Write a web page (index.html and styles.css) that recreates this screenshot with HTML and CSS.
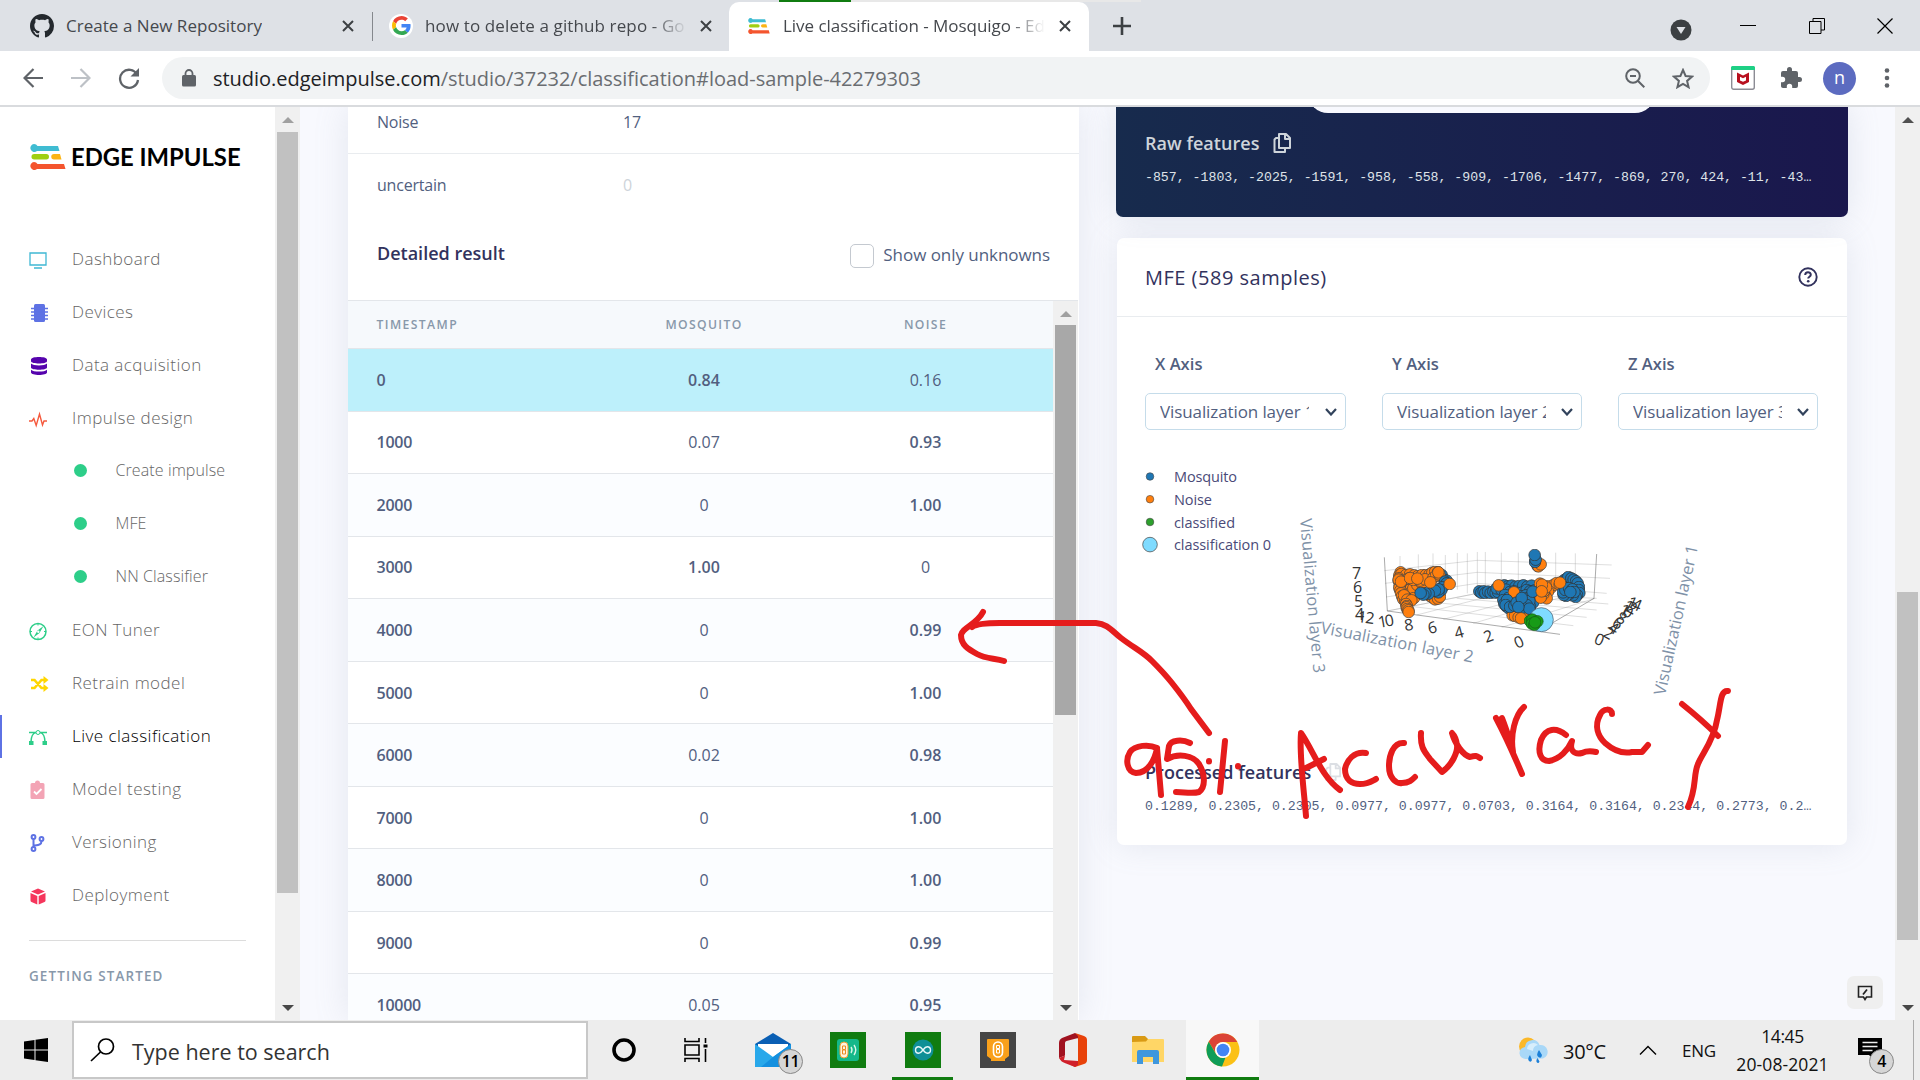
FILE: index.html
```html
<!DOCTYPE html>
<html lang="en">
<head>
<meta charset="utf-8">
<title>Live classification - Mosquigo - Edge Impulse</title>
<link rel="stylesheet" href="styles.css">
</head>
<body>
<svg class="defs" width="0" height="0">
  <defs>
    <symbol id="ei" viewBox="0 0 36 26">
      <path fill="#3fbcd2" d="M4 0a4 4 0 0 1 3.500 2H28l1.500 5H7a4 4 0 1 1-3-7z"/>
      <rect x="1.500" y="10" width="17.500" height="5.500" rx="2.700" fill="#9fcf12"/>
      <path fill="#fcb414" d="M24 10h6l1.500 5.500H24a2.700 2.700 0 0 1 0-5.500z"/>
      <path fill="#f4552e" d="M4 18a4 4 0 0 1 3.500 2H34l1.500 5H7a4 4 0 1 1-3-7z"/>
    </symbol>
    <symbol id="x" viewBox="0 0 12 12"><path d="M1 1l10 10M11 1L1 11" stroke="#3c4043" stroke-width="2" fill="none"/></symbol>
    <symbol id="copy" viewBox="0 0 18 20"><path d="M6 1h7l4 4v10H6zM12 1v5h5M6 5H3L1.500 6.500V19H12v-4" fill="none" stroke="currentColor" stroke-width="2" stroke-linejoin="round"/></symbol>
    <symbol id="chev" viewBox="0 0 12 8"><path d="M1 1l5 5.500L11 1" fill="none" stroke="#32435c" stroke-width="2.200"/></symbol>
    <marker id="mb" viewBox="-19 -19 38 38" markerWidth="38" markerHeight="38" markerUnits="userSpaceOnUse"><circle r="17.500" fill="#1f77b4" stroke="#333" stroke-width="2.200"/></marker>
    <marker id="mo" viewBox="-19 -19 38 38" markerWidth="38" markerHeight="38" markerUnits="userSpaceOnUse"><circle r="17.500" fill="#ff7f0e" stroke="#444" stroke-width="2.200"/></marker>
    <marker id="mg" viewBox="-19 -19 38 38" markerWidth="38" markerHeight="38" markerUnits="userSpaceOnUse"><circle r="17.500" fill="#179b17" stroke="#175f17" stroke-width="2.200"/></marker>
  </defs>
</svg>

<header class="tabs">
  <div class="tab t1">
    <svg width="24" height="24" viewBox="0 0 16 16"><path fill="#24292e" d="M8 0C3.580 0 0 3.580 0 8c0 3.540 2.290 6.530 5.470 7.590.4.070.55-.17.55-.38 0-.19-.01-.82-.01-1.490-2.010.37-2.530-.49-2.690-.94-.09-.23-.48-.94-.82-1.130-.28-.15-.68-.52-.01-.53.63-.01 1.080.58 1.230.82.72 1.210 1.870.87 2.330.66.070-.52.28-.87.51-1.070-1.780-.2-3.640-.89-3.640-3.950 0-.87.31-1.590.82-2.150-.08-.2-.36-1.020.08-2.120 0 0 .67-.21 2.200.82.64-.18 1.320-.27 2-.27s1.360.09 2 .27c1.530-1.040 2.200-.82 2.200-.82.44 1.100.16 1.920.08 2.120.51.56.82 1.270.82 2.150 0 3.070-1.870 3.750-3.650 3.950.29.25.54.73.54 1.480 0 1.070-.01 1.930-.01 2.200 0 .21.15.46.55.38A8.010 8.010 0 0 0 16 8c0-4.420-3.580-8-8-8z"/></svg>
    <span class="tt">Create a New Repository</span>
    <svg class="cl" width="12" height="12"><use href="#x"/></svg>
  </div>
  <div class="tab t2">
    <span class="gicon"><svg width="19" height="19" viewBox="0 0 48 48"><path fill="#EA4335" d="M24 9.500c3.540 0 6.710 1.220 9.210 3.600l6.850-6.850C35.900 2.380 30.470 0 24 0 14.620 0 6.510 5.380 2.560 13.220l7.980 6.190C12.430 13.720 17.740 9.500 24 9.500z"/><path fill="#4285F4" d="M46.980 24.550c0-1.570-.15-3.090-.38-4.550H24v9.020h12.940c-.58 2.960-2.260 5.480-4.780 7.180l7.730 6c4.510-4.180 7.090-10.360 7.090-17.650z"/><path fill="#FBBC05" d="M10.530 28.590c-.48-1.450-.76-2.990-.76-4.590s.27-3.140.76-4.590l-7.980-6.190C.92 16.460 0 20.120 0 24c0 3.880.92 7.540 2.560 10.780l7.970-6.190z"/><path fill="#34A853" d="M24 48c6.480 0 11.930-2.130 15.890-5.810l-7.730-6c-2.150 1.450-4.920 2.300-8.160 2.300-6.260 0-11.570-4.220-13.470-9.910l-7.980 6.190C6.510 42.620 14.620 48 24 48z"/></svg></span>
    <span class="tt fade">how to delete a github repo - Go</span>
    <svg class="cl" width="12" height="12"><use href="#x"/></svg>
  </div>
  <div class="tab t3">
    <svg width="22" height="16" viewBox="0 0 36 26" preserveAspectRatio="none"><use href="#ei" width="36" height="26"/></svg>
    <span class="tt fade">Live classification - Mosquigo - Ed</span>
    <svg class="cl" width="12" height="12"><use href="#x"/></svg>
  </div>
  <svg class="plus" width="18" height="18" viewBox="0 0 18 18"><path d="M9 0v18M0 9h18" stroke="#3c4043" stroke-width="2.600"/></svg>
  <div class="win">
    <svg width="22" height="22" viewBox="0 0 22 22"><circle cx="11" cy="11" r="10.500" fill="#3c4043"/><path fill="#dee1e6" d="M6.500 8h9L11 15z"/></svg>
    <svg width="16" height="16" viewBox="0 0 16 16"><path d="M0 7.500h16" stroke="#000"/></svg>
    <svg width="16" height="16" viewBox="0 0 16 16"><path d="M.5 3.500h11.500v12H.5zM4 3.500V.5h11.500v11.500H12" fill="none" stroke="#000"/></svg>
    <svg width="16" height="16" viewBox="0 0 16 16"><path d="M.5.5l15 15M15.500.5L.5 15.500" stroke="#000" stroke-width="1.200"/></svg>
  </div>
  <div class="load"></div>
</header>

<nav class="bar">
  <div class="navs">
    <svg width="20" height="20" viewBox="0 0 20 20"><path d="M20 10H2M10.500 1L1.500 10l9 9" fill="none" stroke="#5f6368" stroke-width="2.200"/></svg>
    <svg width="20" height="20" viewBox="0 0 20 20"><path d="M0 10h18M9.500 1l9 9-9 9" fill="none" stroke="#bdc1c6" stroke-width="2.200"/></svg>
    <svg width="22" height="22" viewBox="0 0 22 22"><path d="M19 7.500A9 9 0 1 0 20 13" fill="none" stroke="#5f6368" stroke-width="2.300"/><path d="M21 1v8.500h-8.500z" fill="#5f6368"/></svg>
  </div>
  <div class="omni">
    <svg width="14" height="18" viewBox="0 0 14 18"><rect y="6" width="14" height="11.500" rx="1.500" fill="#5f6368"/><path d="M3.500 7V4.500a3.500 3.500 0 0 1 7 0V7" fill="none" stroke="#5f6368" stroke-width="1.800"/></svg>
    <span class="url"><b>studio.edgeimpulse.com</b>/studio/37232/classification#load-sample-42279303</span>
    <svg class="zo" width="20" height="20" viewBox="0 0 20 20"><circle cx="8" cy="8" r="6.800" fill="none" stroke="#5f6368" stroke-width="2"/><path d="M5 8h6M12.800 12.800l6.500 6.500" stroke="#5f6368" stroke-width="2"/></svg>
    <svg width="22" height="21" viewBox="0 0 22 21"><path d="M11 2l2.600 6 6.400.6-4.900 4.300 1.500 6.300L11 15.900l-5.600 3.300 1.500-6.300L2 8.600 8.400 8z" fill="none" stroke="#5f6368" stroke-width="2"/></svg>
  </div>
  <div class="exts">
    <svg width="24" height="24" viewBox="0 0 24 24"><rect x=".7" y=".7" width="22.600" height="22.600" rx="2" fill="#fff" stroke="#8c8c94" stroke-width="1.400"/><path fill="#1ed085" d="M0 1.500A1.500 1.500 0 0 1 1.500 0h21A1.500 1.500 0 0 1 24 1.500V4H0z"/><path fill="#b8101f" d="M6 6.500l6 3 6-3v9.500l-6 3-6-3zm3 4.200V14.500l3 1.300 3-1.300v-3.800l-3 1.600z"/></svg>
    <svg width="24" height="24" viewBox="0 0 24 24"><path fill="#5f6368" d="M20.500 11H19V7a2 2 0 0 0-2-2h-4V3.500a2.500 2.500 0 0 0-5 0V5H4a2 2 0 0 0-2 2v3.800h1.500a2.700 2.700 0 0 1 0 5.400H2V20c0 1.100.9 2 2 2h3.800v-1.500a2.700 2.700 0 0 1 5.400 0V22H17a2 2 0 0 0 2-2v-4h1.500a2.500 2.500 0 0 0 0-5z"/></svg>
    <span class="av">n</span>
    <svg width="6" height="20" viewBox="0 0 6 20"><circle cx="3" cy="2.500" r="2.300"/><circle cx="3" cy="10" r="2.300"/><circle cx="3" cy="17.500" r="2.300"/></svg>
  </div>
</nav>

<div class="page">
  <aside class="side">
    <div class="logo"><svg width="36" height="26"><use href="#ei"/></svg><span>EDGE IMPULSE</span></div>
    <div class="menu">
      <a><svg viewBox="0 0 18 18"><path d="M1 2h16v12H1zM5 17h8" fill="none" stroke="#3fb8d4" stroke-width="1.300"/></svg>Dashboard</a>
      <a><svg viewBox="0 0 18 18"><rect x="5" width="11" height="18" rx="1.500" fill="#5e72e4"/><path d="M2 4.500h17M2 8h17M2 11.500h17M2 15h17" stroke="#5e72e4" stroke-width="1.300"/></svg>Devices</a>
      <a><svg viewBox="0 0 18 18"><path fill="#5603ad" d="M2 2.500C2-.8 18-.8 18 2.500v1.800c0 3-16 3-16 0zM2 6.500c2 2.500 14 2.500 16 0v4c0 3-16 3-16 0zM2 12.700c2 2.500 14 2.500 16 0v2.800c0 3.300-16 3.300-16 0z"/></svg>Data acquisition</a>
      <a><svg viewBox="0 0 18 18"><path d="M0 11h3l1.800-2.500 2.400 7L10.500 4l3 11 1.500-4H18" fill="none" stroke="#f5593d" stroke-width="1.400"/></svg>Impulse design</a>
      <a class="sub"><i></i>Create impulse</a>
      <a class="sub"><i></i>MFE</a>
      <a class="sub"><i></i>NN Classifier</a>
      <a><svg viewBox="0 0 18 18"><circle cx="9" cy="9.500" r="8" fill="none" stroke="#2dce89" stroke-width="1.500"/><path fill="#2dce89" d="M14.500 4l-4 7-6 4.500 4-7z"/><circle cx="9.300" cy="9.800" r="1.200" fill="#fff"/><path d="M9 1.500v2M9 15.500v2M1 9.500h2M15 9.500h2" stroke="#2dce89"/></svg>EON Tuner</a>
      <a><svg viewBox="0 0 18 18"><path d="M2 5h3.500l7 8H16M2 13h3.500l7-8H16" fill="none" stroke="#ffd600" stroke-width="2.600"/><path fill="#ffd600" d="M14.500 1l5 4-5 4zM14.500 9l5 4-5 4z"/></svg>Retrain model</a>
      <a class="on"><svg viewBox="0 0 18 18"><path d="M2 14C2 9 4 5 7 4.500M16 14c0-5-2-9-5-9.500M0 4.500h18" fill="none" stroke="#2dce89" stroke-width="1.600"/><path fill="#2dce89" d="M0 13h4.500v4H0zM13.500 13H18v4h-4.500z"/><circle cx="9" cy="4.500" r="2" fill="#fff" stroke="#2dce89"/></svg>Live classification</a>
      <a><svg viewBox="0 0 18 18"><path fill="#f3a4b5" d="M3 2h3a2.500 2.500 0 0 1 5 0h3a1.500 1.500 0 0 1 1.500 1.500v13A1.500 1.500 0 0 1 14 18H3a1.500 1.500 0 0 1-1.500-1.500v-13A1.500 1.500 0 0 1 3 2z"/><path d="M5 10.500l2.500 2.500 5-5" fill="none" stroke="#fff" stroke-width="1.800"/></svg>Model testing</a>
      <a><svg viewBox="0 0 18 18"><g fill="none" stroke="#5e72e4" stroke-width="2"><circle cx="4.500" cy="3" r="1.900"/><circle cx="4.500" cy="15" r="1.900"/><circle cx="12.500" cy="5" r="1.900"/><path d="M4.500 5v8M12.500 7c0 4-3 4-8 4.800"/></g></svg>Versioning</a>
      <a><svg viewBox="0 0 18 18"><path fill="#f5365c" d="M9 1.500l7 3-7 3-7-3zM1.500 6l6.800 3v8.500L2.500 15c-.6-.3-1-.7-1-1.500zM16.500 6L9.700 9v8.500l5.800-2.500c.6-.3 1-.7 1-1.500z"/></svg>Deployment</a>
    </div>
    <div class="start">GETTING STARTED</div>
  </aside>
  <div class="sb sbl"><i class="up"></i><div class="th"></div><i class="dn"></i></div>

  <main class="main">
    <section class="card res">
      <div class="kv k1"><span>Noise</span><span>17</span></div>
      <div class="kv k2"><span>uncertain</span><span class="z">0</span></div>
      <div class="dh"><h3>Detailed result</h3><i class="cb"></i><span>Show only unknowns</span></div>
      <div class="tw">
        <div class="tb">
          <div class="r h"><span>TIMESTAMP</span><span>MOSQUITO</span><span>NOISE</span></div>
          <div class="r sel"><b>0</b><b>0.84</b><span>0.16</span></div>
          <div class="r"><b>1000</b><span>0.07</span><b>0.93</b></div>
          <div class="r"><b>2000</b><span>0</span><b>1.00</b></div>
          <div class="r"><b>3000</b><b>1.00</b><span>0</span></div>
          <div class="r"><b>4000</b><span>0</span><b>0.99</b></div>
          <div class="r"><b>5000</b><span>0</span><b>1.00</b></div>
          <div class="r"><b>6000</b><span>0.02</span><b>0.98</b></div>
          <div class="r"><b>7000</b><span>0</span><b>1.00</b></div>
          <div class="r"><b>8000</b><span>0</span><b>1.00</b></div>
          <div class="r"><b>9000</b><span>0</span><b>0.99</b></div>
          <div class="r"><b>10000</b><span>0.05</span><b>0.95</b></div>
        </div>
        <div class="sb sbt"><i class="up"></i><div class="th"></div><i class="dn"></i></div>
      </div>
    </section>
    <div class="right">
      <section class="raw">
        <div class="pill"></div>
        <h3>Raw features <svg width="18" height="20"><use href="#copy"/></svg></h3>
        <p class="mono">-857, -1803, -2025, -1591, -958, -558, -909, -1706, -1477, -869, 270, 424, -11, -43…</p>
      </section>
      <section class="card mfe">
        <div class="mh"><h2>MFE (589 samples)</h2><svg width="20" height="20" viewBox="0 0 20 20"><circle cx="10" cy="10" r="8.700" fill="none" stroke="#32325d" stroke-width="1.900"/><path d="M7.200 8c0-3.600 5.600-3.600 5.600-.3 0 2-2.600 2-2.600 3.800" fill="none" stroke="#32325d" stroke-width="2"/><circle cx="10.200" cy="14.300" r="1.300" fill="#32325d"/></svg></div>
        <div class="axes">
          <div><label>X Axis</label><div class="se"><span>Visualization layer 1</span><svg width="12" height="8"><use href="#chev"/></svg></div></div>
          <div><label>Y Axis</label><div class="se"><span>Visualization layer 2</span><svg width="12" height="8"><use href="#chev"/></svg></div></div>
          <div><label>Z Axis</label><div class="se"><span>Visualization layer 3</span><svg width="12" height="8"><use href="#chev"/></svg></div></div>
        </div>
        <svg class="plot" width="730" height="300" viewBox="1117 450 730 300">
          <g class="lg">
            <circle cx="1150" cy="476.500" r="3.800" fill="#1f77b4" stroke="#444" stroke-width=".6"/><text x="1174" y="482" textLength="63">Mosquito</text>
            <circle cx="1150" cy="499.200" r="3.800" fill="#ff7f0e" stroke="#444" stroke-width=".6"/><text x="1174" y="505" textLength="38">Noise</text>
            <circle cx="1150" cy="522" r="3.800" fill="#2ca02c" stroke="#444" stroke-width=".6"/><text x="1174" y="528" textLength="61">classified</text>
            <circle cx="1150" cy="544.600" r="7.300" fill="#7fdbff" stroke="#444" stroke-width=".7"/><text x="1174" y="550" textLength="97">classification 0</text>
          </g>
          <g transform="translate(1330 530) scale(.33333)">
            <g fill="none" stroke="#999" stroke-width="1.300" opacity=".75">
              <path d="M163 122L442 91 845 105M165 160L442 127 840 145M168 201L442 160 830 190M172 243L442 190 800 205M210 78v90M265 73v90M309 70v130M346 75v120M382 69v110M412 70v120M442 66v130M466 66v130M514 68v110M565 68v110M677 68v110M736 70v130M172 243L442 190M260 255L514 190M340 268L620 195M430 280L700 200M515 292L795 205M442 190L835 222M380 205L800 240M320 218L770 262M250 230L730 287"/>
            </g>
            <path d="M163 82L172 243 690 313M800 72L792 205 640 295" fill="none" stroke="#555" stroke-width="1.500"/>
            <g fill="none">
              <path marker-start="url(#mb)" marker-mid="url(#mb)" marker-end="url(#mb)" d="M325 128L335 135 343 150 350 152"/>
              <path marker-start="url(#mo)" marker-mid="url(#mo)" marker-end="url(#mo)" d="M212 127L208 136 214 132 225 165 232 180 240 190 250 175 262 165 275 160 228 135 240 133 253 136 264 138 276 135 288 135 299 133 307 128 315 126 324 127 207 145 206 152 212 160 209 166 208 174 211 182 213 190 216 199 220 208 226 213 236 214 245 208 252 204 220 150 235 146 250 150 270 152 285 148 310 144 318 137 328 133"/>
              <path marker-start="url(#mo)" marker-mid="url(#mo)" marker-end="url(#mo)" d="M300 198L308 203 315 208 324 206 330 200 206 149 213 155 240 144 262 146 222 196 232 209 244 211 325 127"/>
              <path marker-start="url(#mb)" marker-mid="url(#mb)" marker-end="url(#mb)" d="M345 155L350 160 337 172 334 180 325 187 326 178 315 182 296 191 286 190 280 194 272 189"/>
              <path marker-start="url(#mo)" marker-mid="url(#mo)" marker-end="url(#mo)" d="M301 157L359 162M228 222L231 228 230 232 232 237 235 241 236 246"/>
              <path marker-start="url(#mb)" marker-mid="url(#mb)" marker-end="url(#mb)" d="M448 184L454 188 461 184 466 189 474 185 482 189 490 185 497 188 504 186 500 175 512 169 523 166 534 169 545 167 557 170 568 168 580 166 592 170 605 167 515 180 528 179 540 186 552 184 565 189 578 187 590 180 600 184 615 181 624 190 635 182 525 195 535 204 520 210 523 222 529 229 537 235 548 222 556 212 566 204 576 199 588 196 600 200 614 205 609 218 600 230 592 242 580 248 570 240 558 244 547 240 567 254 585 255"/>
              <path marker-start="url(#mo)" marker-mid="url(#mo)" marker-end="url(#mo)" d="M506 166L552 187 630 161 637 168 647 172 655 168 663 173 672 164 680 159 689 163 698 156 708 151 654 185 644 195 650 205 640 192 632 203 642 183 648 172 636 164M548 256L555 258 566 262 582 250 580 262"/>
              <path marker-start="url(#mb)" marker-mid="url(#mb)" marker-end="url(#mb)" d="M703 150L710 146 715 141 724 145 731 149 738 154 743 160 747 171 746 180 748 189 741 195 737 201 728 196 719 191 708 198 701 195 699 187 706 180 717 174 727 178 733 186 721 186M621 101L617 94 623 108"/>
              <path marker-start="url(#mo)" marker-mid="url(#mo)" marker-end="url(#mo)" d="M625 109L632 103"/>
              <path marker-start="url(#mb)" marker-mid="url(#mb)" marker-end="url(#mb)" d="M615 96L617 89 614 75M531 210L527 225 540 231 553 227 560 218 576 211 588 206 598 213 590 225 578 233 598 236 575 204 608 185 565 231"/>
              <path marker-start="url(#mo)" marker-mid="url(#mo)" marker-end="url(#mo)" d="M635 184L690 158 573 265"/>
            </g>
            <circle cx="634" cy="269" r="36" fill="#7fdbff" stroke="#456" stroke-width="2"/>
            <path marker-start="url(#mg)" marker-mid="url(#mg)" marker-end="url(#mg)" fill="none" d="M600 273L607 269 606 281 613 284 622 274 615 277"/>
          </g>
          <g class="tk">
            <text x="1352" y="579">7</text><text x="1353" y="593">6</text><text x="1354" y="607">5</text><text x="1355" y="620">4</text>
            <text transform="translate(1357 622) rotate(7)" textLength="17">12</text><text transform="translate(1379 628) rotate(-10)" textLength="16">10</text><text transform="translate(1405 631) rotate(-8)">8</text><text transform="translate(1429 634) rotate(-12)">6</text><text transform="translate(1456 639) rotate(-15)">4</text><text transform="translate(1486 643) rotate(-20)">2</text><text transform="translate(1517 649) rotate(-24)">0</text>
            <text transform="translate(1593 643) rotate(22)">0</text><text transform="translate(1602 636) rotate(28)">2</text><text transform="translate(1607 631) rotate(28)">4</text><text transform="translate(1611 626) rotate(28)">6</text><text transform="translate(1615 621) rotate(28)">8</text><text transform="translate(1618 613) rotate(28)" textLength="13">10</text><text transform="translate(1622 609) rotate(28)" textLength="13">12</text><text transform="translate(1626 606) rotate(24)" textLength="14">14</text>
          </g>
          <g class="at">
            <text transform="translate(1300 519) rotate(85)" textLength="155">Visualization layer 3</text>
            <text transform="translate(1320 633) rotate(11)" textLength="155">Visualization layer 2</text>
            <text transform="translate(1665 696) rotate(-77.500)" textLength="153">Visualization layer 1</text>
          </g>
        </svg>
        <h3 class="pf">Processed features <svg width="16" height="18"><use href="#copy"/></svg></h3>
        <p class="mono">0.1289, 0.2305, 0.2305, 0.0977, 0.0977, 0.0703, 0.3164, 0.3164, 0.2344, 0.2773, 0.2…</p>
      </section>
    </div>
    <div class="fb"><svg width="16" height="16" viewBox="0 0 16 16"><path d="M1.500 1.500h13v10.500H9.500L8 14.500 6.500 12h-5z" fill="none" stroke="#222" stroke-width="1.600"/><path d="M6 9.500l4-5" stroke="#222" stroke-width="1.800"/></svg></div>
  </main>
  <div class="sb sbp"><i class="up"></i><div class="th"></div><i class="dn"></i></div>
</div>

<svg class="ink" viewBox="0 0 1920 1080" width="1920" height="1080">
  <path d="M983 612C977 624 962 628 961 635C961 645 968 649 977 654C986 659 995 658 1004 661"/>
  <path d="M972 627C976 624 984 623 1000 623L1096 623C1108 624 1112 631 1121 638C1134 648 1143 652 1152 661Q1164 673 1172 683Q1184 698 1191 709L1209 733"/>
  <path d="M1157 748C1149 744 1135 745 1130 752C1125 760 1127 772 1136 773C1148 773 1155 760 1157 748L1161 795"/>
  <path d="M1190 743C1182 739 1171 740 1169 746L1167 759C1178 753 1193 755 1199 764C1205 774 1206 787 1199 792C1192 794 1184 792 1176 792"/>
  <path d="M1209 761v.5M1238 766v.5M1225 741L1220 792"/>
  <path d="M1306 816C1304 790 1299 755 1301 733C1313 750 1321 776 1340 790M1306 768L1324 759"/>
  <path d="M1366 753C1354 751 1347 760 1345 769C1345 780 1352 784 1360 784C1368 784 1372 781 1376 779"/>
  <path d="M1404 743C1393 742 1389 756 1389 766C1389 778 1396 784 1402 783C1409 783 1412 780 1415 777"/>
  <path d="M1421 733C1420 748 1425 752 1430 759L1442 772C1452 765 1458 752 1457 745Q1456 737 1452 733C1455 744 1463 755 1470 757C1476 755 1477 756 1480 758"/>
  <path d="M1496 718C1505 735 1514 755 1522 774M1502 718C1506 728 1509 738 1512 747M1513 752C1510 735 1515 715 1524 707"/>
  <path d="M1566 735C1556 727 1546 728 1541 740C1537 753 1541 761 1549 761C1560 759 1568 750 1572 741C1569 750 1574 755 1582 753Q1588 750 1596 752"/>
  <path d="M1612 714C1612 708 1603 708 1600 715C1594 726 1598 736 1605 743C1613 750 1623 754 1632 752L1642 752L1648 745"/>
  <path d="M1682 704Q1702 720 1718 736M1728 691C1720 690 1721 704 1717 720C1714 740 1702 754 1698 764C1693 775 1697 788 1688 807"/>
</svg>

<footer class="task">
  <div class="wl"><svg width="24" height="24" viewBox="0 0 24 24"><path d="M0 3.500l10.500-1.500V11.500H0zM11.500 1.800L24 0v11.500H11.500zM0 12.500h10.500V22L0 20.500zM11.500 12.500H24V24l-12.500-1.800z"/></svg></div>
  <div class="sr"><svg width="25" height="24" viewBox="0 0 25 24"><circle cx="16" cy="8.500" r="7.500" fill="none" stroke="#000" stroke-width="1.700"/><path d="M10.500 14L1 23" stroke="#000" stroke-width="1.700"/></svg><span>Type here to search</span></div>
  <div class="ap cortana"><svg width="26" height="26" viewBox="0 0 26 26"><circle cx="13" cy="13" r="10" fill="none" stroke="#000" stroke-width="3.600"/></svg></div>
  <div class="ap tv"><svg width="25" height="24" viewBox="0 0 25 24"><path d="M1 0v3.500h14V0M1 24v-3.500h14V24M1 7h14v10H1zM21.500 0v5M21.500 11v13" fill="none" stroke="#000" stroke-width="1.600"/><path d="M19.500 6.500h4v3h-4z"/></svg></div>
  <div class="ap"><svg width="36" height="34" viewBox="0 0 36 34"><path fill="#0a5fb4" d="M0 11L18 0l18 11v8H0z"/><path fill="#fff" d="M3 11h30v8L18 25 3 19z"/><path fill="#28a8ea" d="M0 11l18 13 18-13v23H0z"/><path fill="#1490df" d="M18 24L36 11v23H6z"/></svg><em>11</em></div>
  <div class="ap"><svg width="36" height="36" viewBox="0 0 36 36"><path fill="#107c10" d="M0 0h36v36H0z"/><rect x="7" y="7" width="22" height="22" rx="3" fill="#14b88a"/><rect x="10" y="10" width="8" height="16" rx="4" fill="#fff4e0" stroke="#f0a030"/><path d="M12.500 14h3v3.500h-3zM12.500 18h3v4h-3z" fill="none" stroke="#f08a20"/><path d="M21 15q2 3 0 6M24 13q3.500 5 0 10" fill="none" stroke="#d8f6e8" stroke-width="1.400"/></svg></div>
  <div class="ap un"><svg width="36" height="36" viewBox="0 0 36 36"><path fill="#107c10" d="M0 0h36v36H0z"/><circle cx="18" cy="18" r="10.500" fill="#0f8f96"/><path d="M18 18c-2-2.700-3-3.200-4.300-3.200a3.200 3.200 0 0 0 0 6.400c1.300 0 2.300-.5 4.300-3.200s3-3.200 4.300-3.200a3.200 3.200 0 0 1 0 6.400c-1.300 0-2.300-.5-4.300-3.200z" fill="none" stroke="#e8f8f8" stroke-width="1.400"/></svg></div>
  <div class="ap"><svg width="36" height="36" viewBox="0 0 36 36"><path fill="#454545" d="M0 0h36v36H0z"/><path fill="#f9a01b" d="M8 7h20a1 1 0 0 1 1 1v16l-4 3v2H11v-2l-4-3V8a1 1 0 0 1 1-1z"/><rect x="13.500" y="10" width="9" height="15" rx="4.500" fill="none" stroke="#fff" stroke-width="1.600"/><path d="M16.500 13.500h3v3h-3zM16.500 17.500h3V21h-3z" fill="none" stroke="#fff"/></svg></div>
  <div class="ap"><svg width="28" height="34" viewBox="0 0 28 34"><path fill="#e8420a" d="M16 0l9 3q3 1 3 4v20q0 3-3 4l-9 3-4-2 7-3V6z"/><path fill="#a01220" d="M16 0L3 5Q0 6.500 0 10v15l6-2.500V10q0-1.500 1.500-2L19 5V3z"/><path fill="#d0202a" d="M0 25l6-2.500L5 27l14 1v4l-3 2-9-3.500Q2 29 0 25z"/></svg></div>
  <div class="ap"><svg width="32" height="28" viewBox="0 0 32 28"><path fill="#d99a14" d="M0 1q0-1 1-1h12l3 3v6H0z"/><path fill="#ffd666" d="M0 6l14-.5L16 3h15q1 0 1 1v22H0z"/><path fill="#3f97dd" d="M5 28V16q0-2 2-2h18q2 0 2 2v12h-6v-7H11v7z"/></svg></div>
  <div class="ap act"><svg width="34" height="34" viewBox="0 0 34 34"><circle cx="17" cy="17" r="16.500" fill="#fbc116"/><path fill="#db4437" d="M2.700 8.700A16.500 16.500 0 0 1 31.300 9H17a8 8 0 0 0-7.300 11z"/><path fill="#0f9d58" d="M2.700 8.700L10 21a8 8 0 0 0 9.500 3.600L16 33.500A16.500 16.500 0 0 1 2.700 8.700z"/><circle cx="17" cy="17" r="8" fill="#fff"/><circle cx="17" cy="17" r="6.300" fill="#4285f4"/></svg></div>
  <div class="tray">
    <svg class="wx" width="31" height="26" viewBox="0 0 31 26"><circle cx="10" cy="9.500" r="9" fill="#fbb828"/><path fill="#a9d8f8" d="M8 22a6 6 0 0 1-1-12 7.500 7.500 0 0 1 14.500-2A7 7 0 0 1 25 21.500z"/><path fill="#d7eefc" d="M9 12a6.500 6.500 0 0 1 11-4q-5 1-5 6z"/><path fill="#1c80d8" d="M12 18q-3 4-1 6t3-1zM21 13q-3.500 5-.5 7t3.500-2zM19.500 21q-2 3-.5 4.500t2.500-1z"/></svg>
    <span class="temp">30°C</span>
    <svg class="cv" width="18" height="10" viewBox="0 0 18 10"><path d="M1 9.500l8-8 8 8" fill="none" stroke="#000" stroke-width="1.400"/></svg>
    <span class="eng">ENG</span>
    <div class="clk"><span>14:45</span><span class="date">20-08-2021</span></div>
    <div class="nt"><svg width="24" height="25" viewBox="0 0 24 25"><path d="M0 0h24v17h-7v6l-6-6H0z"/><path d="M4.500 4.500h15M4.500 8.500h15M4.500 12.500h10" stroke="#eee" stroke-width="1.300"/></svg><em>4</em></div>
    <i class="edge"></i>
  </div>
</footer>
</body>
</html>
```
FILE: styles.css
```css
* { box-sizing: border-box; }
body { margin: 0; width: 1920px; height: 1080px; overflow: hidden; position: relative; font-family: "Open Sans", "Noto Sans", sans-serif; background: #fff; }
h2, h3, p { margin: 0; font-weight: 400; }
svg { display: block; flex: none; }
.defs { position: absolute; }
em { font-style: normal; }

/* browser tabs */
.tabs { height: 51px; background: #dee1e6; display: flex; align-items: center; position: relative; font-size: 17px; color: #45484d; }
.tab { display: flex; align-items: center; height: 51px; }
.tt { white-space: nowrap; overflow: hidden; }
.cl { margin-left: auto; }
.t1 { width: 373px; padding: 0 19px 0 30px; position: relative; }
.t1::after { content: ""; position: absolute; right: 0; top: 12px; width: 1.5px; height: 29px; background: #85888d; }
.t1 .tt { margin-left: 12px; letter-spacing: .03px; }
.t2 { width: 356px; padding: 0 17px 0 16px; }
.gicon { width: 24px; height: 24px; border-radius: 12px; background: #fff; display: flex; align-items: center; justify-content: center; flex: none; }
.t2 .tt { margin-left: 12px; width: 263px; letter-spacing: .12px; }
.fade { -webkit-mask-image: linear-gradient(90deg, #000 86%, transparent); mask-image: linear-gradient(90deg, #000 86%, transparent); }
.t3 { width: 360px; height: 49px; align-self: flex-end; background: #fff; border-radius: 10px 10px 0 0; padding: 0 18px 2px 19px; }
.t3 .tt { margin-left: 13px; width: 262px; letter-spacing: -0.04px; }
.plus { margin-left: 24px; }
.win { margin-left: auto; display: flex; align-items: center; padding-right: 27px; height: 42px; }
.win svg:first-child { margin: 8px 48px 0 0; }
.win svg:nth-child(2), .win svg:nth-child(3) { margin-right: 52.500px; }
.load { position: absolute; left: 779px; top: 0; width: 362px; height: 2px; background: linear-gradient(90deg, #107c10 72px, #e8e8e8 72px); }

/* toolbar */
.bar { height: 56px; border-bottom: 2px solid #d9dbde; display: flex; align-items: center; background: #fff; }
.navs { width: 162px; padding-left: 23px; display: flex; align-items: center; gap: 27.500px; }
.omni { width: 1548px; height: 42px; border-radius: 21px; background: #f1f3f4; display: flex; align-items: center; padding: 0 16px 0 20px; }
.url { margin-left: 17px; font-size: 20px; letter-spacing: -0.03px; color: #6a6d71; white-space: nowrap; }
.url b { font-weight: 400; color: #202124; }
.zo { margin: 0 27px 0 auto; }
.exts { display: flex; align-items: center; padding-left: 21px; }
.exts svg:first-child { margin-right: 24px; }
.av { width: 33px; height: 33px; border-radius: 50%; background: #5c6bc0; color: #fff; font-size: 18px; line-height: 31px; text-align: center; margin: 0 28px 0 20px; }
.exts svg:last-child { fill: #5f6368; }

/* page body */
.page { display: flex; height: 913px; overflow: hidden; background: #f8f9fe; }
.side { width: 275px; background: #fff; }
.logo { display: flex; align-items: center; height: 26px; margin: 37px 0 0 29.500px; font: 700 23.800px "Lato", sans-serif; color: #000; }
.logo span { margin-left: 5.500px; white-space: nowrap; }
.menu { padding-top: 62px; }
.menu a { display: flex; align-items: center; height: 53px; padding-left: 29px; font-size: 17px; font-weight: 300; color: #666; letter-spacing: .45px; position: relative; }
.menu a svg { width: 18px; height: 18px; margin: 2px 25px 0 0; overflow: visible; }
.menu .sub { padding-left: 74px; font-size: 16px; letter-spacing: .1px; top: -1px; }
.menu .sub i { width: 13px; height: 13px; border-radius: 50%; background: #2dce89; margin: 2px 28.500px 0 0; }
.menu .on { color: #000; letter-spacing: .47px; }
.menu .on::before { content: ""; position: absolute; left: 0; top: 6px; width: 2px; height: 43px; background: #5e72e4; }
.start { margin: 19px 29px 0; border-top: 1px solid #dcdcdc; padding-top: 26px; font-size: 13.400px; font-weight: 600; letter-spacing: 1.150px; color: #8898aa; white-space: nowrap; }

/* scrollbars */
.sb { width: 25px; background: #f0f0f0; display: flex; flex-direction: column; align-items: center; flex: none; }
.sb i { width: 0; height: 0; border: 6px solid transparent; }
.sb .up { border-top: 0; border-bottom-color: #a0a0a0; margin-top: 10px; }
.sb .dn { border-bottom: 0; border-top-color: #484848; margin: auto 0 9px; }
.sb .th { width: 21px; background: #c1c1c1; }
.sbl .th { height: 761px; margin-top: 9px; }
.sbp .th { height: 348px; margin-top: 469px; }
.sbp .up { border-bottom-color: #505050; }
.sbt .th { height: 390px; background: #a8a8a8; margin-top: 8px; }

/* content */
.main { width: 1595px; padding-left: 48px; display: flex; gap: 37px; position: relative; }
.card { background: #fff; box-shadow: 0 0 32px rgba(136, 152, 170, .18); }
.res { width: 731px; display: flex; flex-direction: column; font-size: 16px; color: #525f7f; }
.kv { display: grid; grid-template-columns: 246px 1fr; align-items: center; padding-left: 29px; height: 47px; letter-spacing: -0.2px; }
.k1 { padding-bottom: 16px; border-bottom: 1px solid #e9ecef; }
.k2 { height: 62px; }
.z { color: #ced4da; }
.dh { display: flex; align-items: center; height: 84px; padding: 0 29px 6px; font-size: 17px; letter-spacing: -0.05px; }
.dh h3 { font-size: 18px; font-weight: 600; color: #32325d; margin-right: auto; letter-spacing: 0; margin-top: -4px; }
.dh span { margin-top: -2px; }
.cb { width: 24px; height: 24px; border: 1px solid #c4c9d0; border-radius: 5px; margin: 2px 9px 0 0; }
.tw { flex: 1; display: flex; border-top: 1px solid #e3e6ea; width: 730px; overflow: hidden; }
.tb { width: 705px; }
.r { display: grid; grid-template-columns: 254px 204px 239px; height: 62.55px; align-items: center; border-bottom: 1px solid #e3e6ea; text-align: center; }
.r > :first-child { text-align: left; padding-left: 28.500px; letter-spacing: -0.25px; }
.r b { font-weight: 600; }
.r:nth-child(even) { background: #fbfdff; }
.r.h { height: 48px; background: #f6f9fc; font-size: 12.200px; font-weight: 600; letter-spacing: 1.350px; color: #8898aa; }
.r.h > :first-child { letter-spacing: 1.400px; }
.r.sel { background: #bdf0fb; }

.right { width: 732px; display: flex; flex-direction: column; gap: 21px; }
.raw { height: 110px; border-radius: 0 0 7px 7px; background: linear-gradient(87deg, #172b4d, #1a174d); box-shadow: 0 0 32px rgba(136, 152, 170, .2); padding: 0 30px; color: #ced4da; position: relative; }
.pill { position: absolute; left: 192px; top: -34px; width: 347px; height: 40px; border-radius: 20px; background: #f8f9fe; }
.raw h3, .pf { font-size: 18px; font-weight: 600; display: flex; align-items: center; gap: 14px; height: 24px; letter-spacing: .03px; white-space: nowrap; }
.raw h3 { margin: 24px 0 0 -1px; }
.mono { font: 13.220px "Liberation Mono", monospace; white-space: nowrap; line-height: 18px; }
.raw .mono { margin: 14px 0 0 -1px; color: #dfe3e8; }
.mfe { width: 730px; height: 607px; margin-left: 1px; border-radius: 7px; }
.mh { height: 79px; border-bottom: 1px solid #e9ecef; display: flex; align-items: center; justify-content: space-between; padding: 0 29px 0 28px; }
.mh h2 { font-size: 20px; font-weight: 500; color: #32325d; letter-spacing: .5px; }
.axes { display: grid; grid-template-columns: 201px 200px 200px; gap: 36px; padding: 35px 28px 20px; }
.axes label { display: block; height: 41px; padding-left: 10px; font-size: 16.600px; line-height: 24px; font-weight: 600; color: #525f7f; }
.se { height: 37px; border: 1px solid #c5dcea; border-radius: 5px; display: flex; align-items: center; justify-content: space-between; padding: 0 8px 0 14px; color: #525f7f; font-size: 17px; }
.se span { width: 149px; overflow: hidden; white-space: nowrap; letter-spacing: -0.1px; }
.plot { display: block; height: 300px; }
.lg text { font-size: 14.500px; fill: #4a4a78; }
.tk text { font-size: 16px; fill: #333; }
.at text { font-size: 16.500px; fill: #7f92a8; }
.pf { color: #32325d; margin: 10px 28px 0; }
.pf svg { color: #dcdfe4; }
.mfe .mono { margin: 14px 28px 0; color: #525f7f; }
.fb { position: absolute; left: 1547px; top: 869px; width: 36px; height: 33px; border-radius: 7px; background: #efefef; display: flex; align-items: center; justify-content: center; }

.ink { position: absolute; left: 0; top: 0; pointer-events: none; fill: none; stroke: #e51c1c; stroke-width: 6; stroke-linecap: round; stroke-linejoin: round; }

/* taskbar */
.task { height: 60px; background: #ededed; display: flex; align-items: center; color: #111; }
.wl { width: 72px; padding-left: 24px; }
.sr { width: 516px; height: 58px; border: 2px solid #c8c8c8; background: #fff; display: flex; align-items: center; padding-left: 16px; font-size: 21.500px; color: #333; }
.sr span { margin: 2px 0 0 17px; white-space: nowrap; }
.ap { width: 75px; height: 60px; display: flex; align-items: center; justify-content: center; position: relative; }
.cortana { width: 72px; }
.tv { width: 73px; margin-right: 2px; }
.ap em, .nt em { position: absolute; width: 25px; height: 25px; border-radius: 50%; background: #d6d6d6; border: 1px solid #888; font-size: 16px; line-height: 23px; text-align: center; color: #000; font-weight: 600; left: 43px; top: 29px; letter-spacing: -0.5px; }
.un::after, .act::after { content: ""; position: absolute; left: 7px; right: 7px; bottom: 0; height: 3px; background: #107c10; }
.act { width: 73px; background: #f8f8f8; margin-left: 1px; }
.act::after { left: 0; right: 0; }
.tray { margin-left: auto; display: flex; align-items: center; height: 60px; }
.temp { font-size: 20px; width: 76px; margin-left: 14px; letter-spacing: -0.3px; padding-top: 3px; }
.eng { margin-left: 25px; font-size: 17px; width: 54px; letter-spacing: -0.3px; }
.clk { width: 93px; text-align: center; font-size: 17.500px; letter-spacing: -0.4px; display: flex; flex-direction: column; line-height: 28px; white-space: nowrap; }
.date { letter-spacing: .1px; }
.nt { position: relative; width: 55px; padding-left: 29px; height: 25px; }
.nt em { left: 40px; top: 11px; }
.edge { width: 1px; height: 60px; background: #aaa; margin: 0 6px 0 29px; }
```
